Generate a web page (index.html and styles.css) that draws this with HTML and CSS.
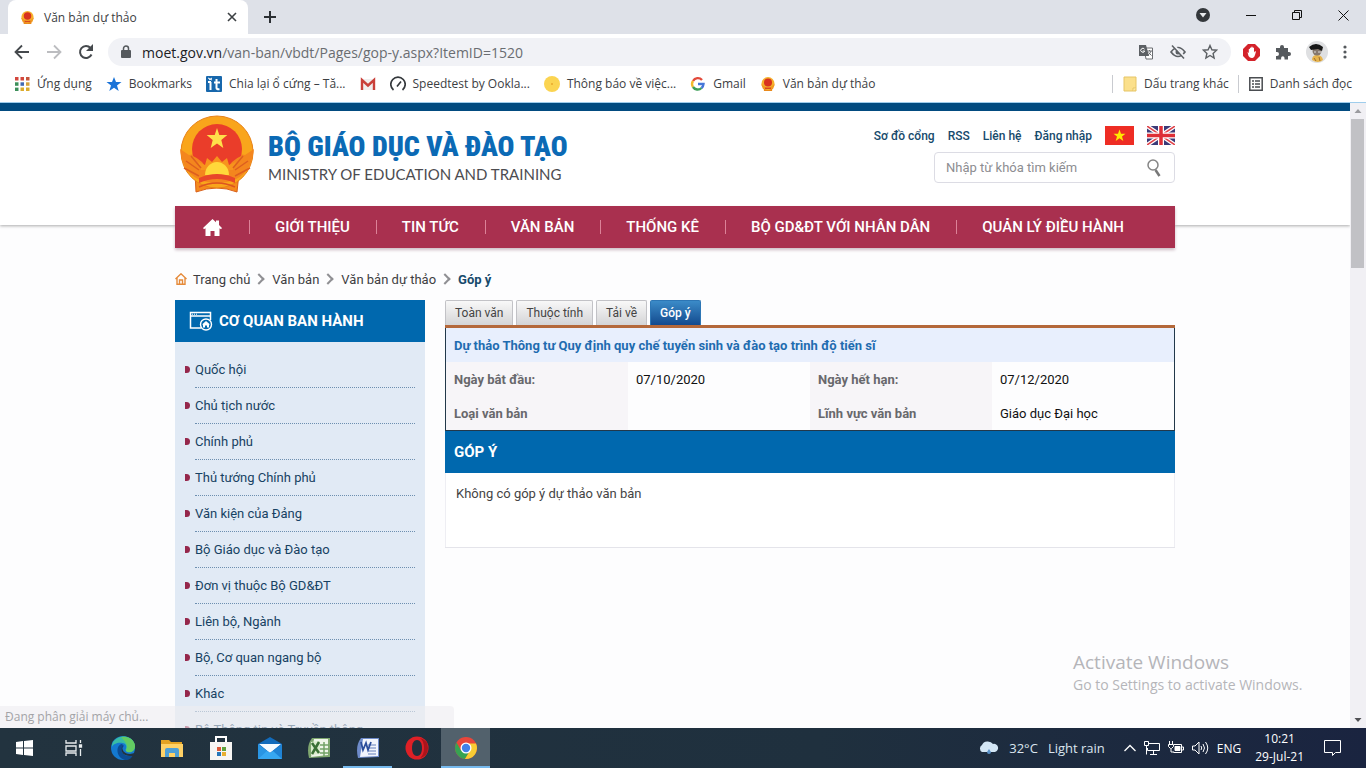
FILE: index.html
```html
<!DOCTYPE html>
<html lang="vi">
<head>
<meta charset="utf-8">
<title>Văn bản dự thảo</title>
<link rel="stylesheet" href="styles.css">
</head>
<body>
<svg class="defs" aria-hidden="true">
  <symbol id="emblem" viewBox="0 0 76 80">
    <path d="M16 58L17 77Q38 69 58 77L60 58Z" fill="#f58a1c" stroke="#d9601a"/>
    <circle cx="38" cy="37" r="36" fill="#f9a51b" stroke="#e88218"/>
    <path d="M1 34Q4 60 24 66L38 69L52 66Q72 60 75 34L66 40L60 39L54 47L22 47L16 39L10 40Z" fill="#f4861e"/>
    <circle cx="38" cy="34" r="25" fill="#ea3d2a"/>
    <path d="M38 13l2.300 7h8l-6 5 2 8-6.300-4.500-6.300 4.500 2-8-6-5h8z" fill="#ffe04a"/>
    <path d="M12 44q10 4 14 14M64 44q-10 4-14 14" fill="none" stroke="#f4861e" stroke-width="7"/>
    <path d="M22 55l-3-8 7 3 2-7 5 4 5-6 5 6 5-4 2 7 7-3-3 8z" fill="#f7941d"/>
    <path d="M26 60a12 13 0 0 1 24 0z" fill="#ffd83a"/>
    <path d="M7 46l13 9M12 41l10 12M69 46l-13 9M64 41l-10 12M5 53l15 8M71 53l-15 8" stroke="#dd5f1f" stroke-width="1.500"/>
    <path d="M20 63Q38 55 56 63V68Q38 60 20 68Z" fill="#e8472a"/>
    <path d="M20 72Q38 64 56 72" fill="none" stroke="#dd5420" stroke-width="1.500"/>
  </symbol>
  <symbol id="emblem-small" viewBox="0 0 16 16">
    <path d="M3 9h10l-1 6H4z" fill="#e98a1c"/>
    <circle cx="8" cy="7.500" r="6.500" fill="#f6b12c"/>
    <circle cx="8" cy="6.500" r="4" fill="#d8321f"/>
    <path d="M1 8l6 4h2l6-4-2 5H3z" fill="#f19a22"/>
    <path d="M5 11.500h6v1.500H5z" fill="#d9481f"/>
  </symbol>
</svg>

<header class="tabstrip">
  <div class="tab">
    <svg class="fav" width="15" height="15"><use href="#emblem-small"/></svg>
    <span class="tab-title">Văn bản dự thảo</span>
    <button class="plain" aria-label="Đóng thẻ"><svg width="10" height="10" viewBox="0 0 10 10"><path d="M1 1l8 8M9 1l-8 8" stroke="#3c4043" stroke-width="1.600"/></svg></button>
  </div>
  <button class="plain newtab" aria-label="Thẻ mới"><svg width="14" height="14" viewBox="0 0 14 14"><path d="M7 1v12M1 7h12" stroke="#2b2f33" stroke-width="2"/></svg></button>
  <div class="winbtns">
    <button class="plain" aria-label="Tìm thẻ"><svg width="14" height="14" viewBox="0 0 14 14"><circle cx="7" cy="7" r="7" fill="#33373b"/><path d="M3.500 5h7L7 9.500z" fill="#e8eaed"/></svg></button>
    <button class="plain" aria-label="Thu nhỏ"><svg width="10" height="10" viewBox="0 0 10 10"><path d="M0 5.500h10" stroke="#111"/></svg></button>
    <button class="plain" aria-label="Khôi phục"><svg width="10" height="10" viewBox="0 0 10 10"><path d="M.5 2.500h7v7h-7zM2.500 2.500v-2h7v7h-2" fill="none" stroke="#111"/></svg></button>
    <button class="plain" aria-label="Đóng"><svg width="11" height="11" viewBox="0 0 11 11"><path d="M.5 .5l10 10M10.500 .5l-10 10" stroke="#111"/></svg></button>
  </div>
</header>

<div class="toolbar">
  <button class="plain" aria-label="Quay lại"><svg width="16" height="16" viewBox="0 0 16 16"><path d="M15 8H2M8 1.500L1.500 8L8 14.500" fill="none" stroke="#45494d" stroke-width="1.800"/></svg></button>
  <button class="plain" aria-label="Tiến"><svg width="16" height="16" viewBox="0 0 16 16"><path d="M1 8h13M8 1.500L14.500 8L8 14.500" fill="none" stroke="#bcbdc0" stroke-width="1.800"/></svg></button>
  <button class="plain" aria-label="Tải lại"><svg width="16" height="16" viewBox="0 0 16 16"><path d="M13.500 10.500A6 6 0 1 1 12.500 4" fill="none" stroke="#45494d" stroke-width="2"/><path d="M15 0v7H8z" fill="#45494d"/></svg></button>
  <div class="omnibox">
    <svg width="10" height="14" viewBox="0 0 10 14"><rect y="5" width="10" height="8" rx="1" fill="#55595d"/><path d="M2.500 6V3.500a2.500 2.500 0 0 1 5 0V6" fill="none" stroke="#55595d" stroke-width="1.500"/></svg>
    <a class="url" href="#"><span>moet.gov.vn</span>/van-ban/vbdt/Pages/gop-y.aspx?ItemID=1520</a>
    <button class="plain" aria-label="Dịch"><svg width="16" height="16" viewBox="0 0 16 16"><path d="M6 4h8.500v11H8z" fill="#fff" stroke="#6a6d71"/><path d="M1 1h7l3 11H1z" fill="#5c6064"/><path d="M6.500 5.200A2 2 0 1 0 6.700 7H4.700" stroke="#fff" fill="none"/><path d="M9 7h5M11.500 6v1M13 7q-1 3-3 4M10.500 8.500l3 3" stroke="#6a6d71" fill="none"/></svg></button>
    <button class="plain" aria-label="Cookie bị chặn"><svg width="16" height="16" viewBox="0 0 16 16"><path d="M1 8Q8-1 15 8Q8 17 1 8z" fill="none" stroke="#5c6064" stroke-width="1.700"/><circle cx="8" cy="8" r="2.500" fill="#5c6064"/><path d="M3.500 1L15 13.500" stroke="#f1f2f6" stroke-width="2"/><path d="M2 1.500L14 14.500" stroke="#5c6064" stroke-width="1.500"/></svg></button>
    <button class="plain" aria-label="Dấu trang"><svg width="16" height="16" viewBox="0 0 16 16"><path d="M8 1.500l1.900 4.300 4.700.4-3.500 3.200 1 4.600L8 11.500 3.900 14l1-4.600L1.400 6.200l4.700-.4z" fill="none" stroke="#5c6064" stroke-width="1.400"/></svg></button>
  </div>
  <div class="extensions">
    <button class="plain" aria-label="AdBlock"><svg width="17" height="17" viewBox="0 0 17 17"><path d="M5 0h7l5 5v7l-5 5H5l-5-5V5z" fill="#d4232b"/><path d="M4.500 8l1 4q1.500 2.500 4 2 2-.5 2.500-3l1-3.500q-1.200-.6-2 1V4q-.8-.8-1.300 0V3q-.8-.8-1.400 0v1Q7.600 3 7 4v1q-.7-.7-1.200 0v4z" fill="#fff"/></svg></button>
    <button class="plain" aria-label="Tiện ích"><svg width="16" height="16" viewBox="0 0 16 16"><path d="M1 4h4V3a2 2 0 0 1 4 0v1h4v4h1a2 2 0 0 1 0 4h-1v3.500H9.500V14a1.700 1.700 0 0 0-3.400 0v1.500H1V12h1a2 2 0 0 0 0-4H1z" fill="#55595d"/></svg></button>
    <button class="plain" aria-label="Hồ sơ"><svg width="22" height="22" viewBox="0 0 22 22"><circle cx="11" cy="11" r="11" fill="#dfe0e2"/><path d="M6 19q0-5 5-5t6 5q-5 4-11 0z" fill="#e7b44d"/><circle cx="11" cy="10" r="4.500" fill="#85776d"/><path d="M3 6q7-6 14 0l-1 4-4-2-7 1z" fill="#171717"/><path d="M8 11h2M12 11h3" stroke="#ddd"/><path d="M8 17l2 3M13 16l1 4" stroke="#9d6d2e"/></svg></button>
    <button class="plain" aria-label="Trình đơn"><svg width="4" height="14" viewBox="0 0 4 14"><g fill="#55595d"><circle cx="2" cy="2" r="1.600"/><circle cx="2" cy="7" r="1.600"/><circle cx="2" cy="12" r="1.600"/></g></svg></button>
  </div>
</div>

<nav class="bookmarks" aria-label="Dấu trang">
  <a href="#"><svg width="16" height="16" viewBox="0 0 16 16"><path d="M1 1h3.500v3.500H1zM6.500 1H10v3.500H6.500z" fill="#d3473d"/><path d="M12 1h3.500v3.500H12z" fill="#c4553c"/><path d="M1 6.300h3.500v3.500H1z" fill="#3d8f5a"/><path d="M6.500 6.300H10v3.500H6.500z" fill="#4169b5"/><path d="M12 6.300h3.500v3.500H12z" fill="#d7a13b"/><path d="M1 11.600h3.500V15H1z" fill="#3d8f5a"/><path d="M6.500 11.600H10V15H6.500zM12 11.600h3.500V15H12z" fill="#dcac2d"/></svg>Ứng dụng</a>
  <a href="#"><svg width="16" height="16" viewBox="0 0 16 16"><path d="M8 1l2 5h5.500L11 9.500l1.700 5.500L8 11.700 3.300 15 5 9.500.5 6H6z" fill="#1a73d8"/></svg>Bookmarks</a>
  <a href="#"><svg width="16" height="16" viewBox="0 0 16 16"><rect width="16" height="16" rx="1" fill="#1767ac"/><path d="M4.500 6v8M10.500 3v9q0 1.500 3 1.200M2 6h3M8 6.500h6" fill="none" stroke="#fff" stroke-width="2"/><path d="M2 2l4 2M6 2L3 4" stroke="#fff"/></svg>Chia lại ổ cứng – Tă...</a>
  <a href="#" aria-label="Gmail"><svg class="alone" width="16" height="16" viewBox="0 0 16 16"><path d="M1 3h14v11H1z" fill="#f0eeee"/><path d="M2 14V4l6 5.500L14 4v10" fill="none" stroke="#c9403a" stroke-width="2.400"/></svg></a>
  <a href="#"><svg width="16" height="16" viewBox="0 0 16 16"><path d="M3.500 14A7.200 7.200 0 1 1 12.500 14M7 10.500L11 5.500" fill="none" stroke="#34383c" stroke-width="1.700"/></svg>Speedtest by Ookla...</a>
  <a href="#"><svg width="16" height="16" viewBox="0 0 16 16"><circle cx="8" cy="8" r="8" fill="#fbd451"/><circle cx="8" cy="8" r="1" fill="#e9a92c"/></svg>Thông báo về việc...</a>
  <a href="#"><svg width="16" height="16" viewBox="0 0 16 16" fill="none" stroke-width="2.400"><path d="M3 5A5.500 5.500 0 0 1 12 4" stroke="#e24a3b"/><path d="M3 11A5.500 5.500 0 0 1 3 5" stroke="#f3b92d"/><path d="M3 11A5.500 5.500 0 0 0 11.500 12" stroke="#3d9e58"/><path d="M8 8h5.500a5.500 5.500 0 0 1-2 4" stroke="#4576d9"/></svg>Gmail</a>
  <a href="#"><svg width="16" height="16"><use href="#emblem-small"/></svg>Văn bản dự thảo</a>
  <div class="right-marks">
    <a href="#"><svg width="14" height="16" viewBox="0 0 14 16"><path d="M1 1h12v14H1z" fill="#fbe08c" stroke="#e6c566"/><path d="M10 15v-3h3" fill="#fff0b8" stroke="#e6c566"/></svg>Dấu trang khác</a>
    <a href="#"><svg width="14" height="14" viewBox="0 0 14 14"><path d="M.8 .8h12.400v12.400H.8z" fill="none" stroke="#4a4d51" stroke-width="1.500"/><path d="M3 4h2M3 7h2M3 10h2M6 4h5M6 7h5M6 10h5" stroke="#4a4d51" stroke-width="1.300"/></svg>Danh sách đọc</a>
  </div>
</nav>

<div class="viewport">
  <div class="page">
    <header class="site-header">
      <div class="wrap header-row">
        <a class="logo" href="#">
          <svg width="76" height="80"><use href="#emblem"/></svg>
          <span class="logo-text"><strong>BỘ GIÁO DỤC VÀ ĐÀO TẠO</strong><span>MINISTRY OF EDUCATION AND TRAINING</span></span>
        </a>
        <div class="tools">
          <div class="quick">
            <a href="#">Sơ đồ cổng</a><a href="#">RSS</a><a href="#">Liên hệ</a><a href="#">Đăng nhập</a>
            <a href="#" aria-label="Tiếng Việt"><svg width="29" height="19" viewBox="0 0 29 19"><path d="M0 0h29v19H0z" fill="#ee2d24"/><path d="M14.500 3.500l1.500 4.300h4.500L17 10.500l1.300 4.500-3.800-2.700-3.800 2.700 1.300-4.500-3.500-2.700H13z" fill="#ffea00"/></svg></a>
            <a href="#" aria-label="English"><svg width="28" height="19" viewBox="0 0 28 19"><path d="M0 0h28v19H0z" fill="#3b3a78"/><path d="M0 0l28 19M28 0L0 19" stroke="#fff" stroke-width="4"/><path d="M0 0l28 19M28 0L0 19" stroke="#e0434a" stroke-width="1.500"/><path d="M14 0v19M0 9.500h28" stroke="#fff" stroke-width="6"/><path d="M14 0v19M0 9.500h28" stroke="#de2f37" stroke-width="3.500"/></svg></a>
          </div>
          <form class="search">
            <input type="text" aria-label="Tìm kiếm" placeholder="Nhập từ khóa tìm kiếm">
            <button type="button" class="plain" aria-label="Tìm"><svg width="14" height="18" viewBox="0 0 14 18"><circle cx="6" cy="6" r="5" fill="none" stroke="#858585" stroke-width="1.500"/><path d="M8.500 11l4 6" stroke="#777" stroke-width="2.500"/></svg></button>
          </form>
        </div>
      </div>
    </header>

    <nav class="wrap mainnav">
      <a class="home" href="#" aria-label="Trang chủ"><svg width="19" height="17" viewBox="0 0 19 17"><path d="M9.500 0L13 3.200V1.500h3v4.500L19 9l-1 1.200-1.500-1V17h-5v-5h-4v5h-5V9.200l-1.500 1L0 9z" fill="#fff"/></svg></a>
      <a href="#">GIỚI THIỆU</a><a href="#">TIN TỨC</a><a href="#">VĂN BẢN</a><a href="#">THỐNG KÊ</a><a href="#">BỘ GD&amp;ĐT VỚI NHÂN DÂN</a><a href="#">QUẢN LÝ ĐIỀU HÀNH</a>
    </nav>

    <div class="wrap crumbs">
      <a href="#"><svg width="12" height="12" viewBox="0 0 12 12"><path d="M.5 6L6 .8 11.500 6M2 5v6.300h8V5M4.500 11V7h3v4" fill="none" stroke="#e58a3a" stroke-width="1.400"/></svg>Trang chủ</a>
      <a href="#">Văn bản</a><a href="#">Văn bản dự thảo</a><a class="current" href="#">Góp ý</a>
    </div>

    <div class="wrap columns">
      <aside class="sidebar">
        <h2><svg width="24" height="20" viewBox="0 0 24 20"><path d="M12 17H1.500V1.500h20V9M1.500 5h20" fill="none" stroke="#fff" stroke-width="1.500"/><path d="M3 3.200h6" stroke="#fff" stroke-dasharray="1 1"/><circle cx="17" cy="13.500" r="5.500" fill="#0068ae" stroke="#fff" stroke-width="1.400"/><path d="M17 10l4 3.500h-1V16.500h-2V14.500h-2v2h-2v-3h-1z" fill="#fff"/></svg>CƠ QUAN BAN HÀNH</h2>
        <ul>
          <li><a href="#">Quốc hội</a></li>
          <li><a href="#">Chủ tịch nước</a></li>
          <li><a href="#">Chính phủ</a></li>
          <li><a href="#">Thủ tướng Chính phủ</a></li>
          <li><a href="#">Văn kiện của Đảng</a></li>
          <li><a href="#">Bộ Giáo dục và Đào tạo</a></li>
          <li><a href="#">Đơn vị thuộc Bộ GD&amp;ĐT</a></li>
          <li><a href="#">Liên bộ, Ngành</a></li>
          <li><a href="#">Bộ, Cơ quan ngang bộ</a></li>
          <li><a href="#">Khác</a></li>
          <li><a href="#">Bộ Thông tin và Truyền thông</a></li>
        </ul>
      </aside>
      <main class="main">
        <div class="doc-tabs">
          <a href="#">Toàn văn</a><a href="#">Thuộc tính</a><a href="#">Tải về</a><a class="active" href="#">Góp ý</a>
        </div>
        <table class="doc">
          <tr><th class="doc-title" colspan="4">Dự thảo Thông tư Quy định quy chế tuyển sinh và đào tạo trình độ tiến sĩ</th></tr>
          <tr><th>Ngày bắt đầu:</th><td>07/10/2020</td><th>Ngày hết hạn:</th><td>07/12/2020</td></tr>
          <tr><th>Loại văn bản</th><td></td><th>Lĩnh vực văn bản</th><td>Giáo dục Đại học</td></tr>
        </table>
        <section class="feedback">
          <h2>GÓP Ý</h2>
          <p>Không có góp ý dự thảo văn bản</p>
        </section>
      </main>
    </div>
  </div>
  <div class="scrollbar">
    <svg width="16" height="16" viewBox="0 0 16 16"><path d="M4.500 10h7L8 6z" fill="#9b9b9f"/></svg>
    <div class="thumb"></div>
    <svg class="down" width="16" height="16" viewBox="0 0 16 16"><path d="M4.500 6h7L8 10z" fill="#505054"/></svg>
  </div>
  <div class="status">Đang phân giải máy chủ...</div>
  <div class="watermark"><strong>Activate Windows</strong>Go to Settings to activate Windows.</div>
</div>

<footer class="taskbar">
  <button aria-label="Start"><svg width="17" height="16" viewBox="0 0 17 16"><path d="M0 2l7-1v6.500H0zM8 .9L17 0v7.500H8zM0 8.500h7V15l-7-1zM8 8.500h9V16l-9-1z" fill="#fff"/></svg></button>
  <button aria-label="Task View"><svg width="18" height="16" viewBox="0 0 18 16" fill="none" stroke="#e7ecee" stroke-width="1.300"><path d="M1 0v3h10V0M1 6h10v5H1zM1 16v-3h10v3M15.500 0v3M15.500 9v7"/><path d="M14.500 5h2v2h-2z" fill="#fff"/></svg></button>
  <button aria-label="Edge"><svg width="24" height="24" viewBox="0 0 24 24"><circle cx="12" cy="12" r="12" fill="#1479cf"/><path d="M1 9C3-1 20-3 23.500 8c2 8-7 10-9 6 1-2 2-6-3-7C7 6 2 8 1 11z" fill="#38bca5"/><path d="M10 1c9-2 17 6 13 13-3 4-9 2-8 0 3-5-1-8-5-13z" fill="#62cb62"/><path d="M11 8c-7 1-6 15 4 16 3 0 6-2 7-5-4 2-9 1-11-3-1-3 0-5 2-6z" fill="#0c4c93"/><path d="M12 10c-2 3 1 8 7 8l5-1v3h-5c-6 0-10-4-8-9z" fill="#22323f"/></svg></button>
  <button aria-label="File Explorer"><svg width="24" height="20" viewBox="0 0 24 20"><path d="M1 2h8l2 2h11v14H1z" fill="#e5a323"/><path d="M1 6h22v13H1z" fill="#ffd166"/><path d="M5 19v-7q0-2 2-2h10q2 0 2 2v7h-4v-4H9v4z" fill="#4e9fd6"/></svg></button>
  <button aria-label="Store"><svg width="24" height="24" viewBox="0 0 24 24"><path d="M7 8V1h10v7" fill="none" stroke="#fff" stroke-width="2"/><path d="M1 6h22v18H1z" fill="#f7f5f3"/><path d="M8 11h4v4H8z" fill="#dc5938"/><path d="M13 11h4v4h-4z" fill="#5fa23d"/><path d="M8 16h4v4H8z" fill="#2777b9"/><path d="M13 16h4v4h-4z" fill="#e8af31"/></svg></button>
  <button aria-label="Mail"><svg width="24" height="22" viewBox="0 0 24 22"><path d="M0 7L12 0l12 7v15H0z" fill="#126bbb"/><path d="M1 7h22L12 16z" fill="#f5fbff"/><path d="M0 7l12 9L0 22z" fill="#2995e3"/><path d="M24 7l-12 9 12 6z" fill="#1f83d5"/><path d="M0 22l9-8 3 2 3-2 9 8z" fill="#36a7f1"/></svg></button>
  <button aria-label="Excel"><svg width="24" height="22" viewBox="0 0 24 22"><path d="M5 1h18v19L2 21q-3-12 3-20z" fill="#7fa76f"/><path d="M7 2h14v16l-17 2z" fill="#eef5e8"/><path d="M4 5l9-1v13l-9 1z" fill="#dbeccd"/><path d="M5 6l7 10M12 5L5 17" stroke="#3b7135" stroke-width="2.500"/><path d="M13 8h9M13 12h9M13 16h9M17 5v14" stroke="#73a267" stroke-width="1.500"/></svg></button>
  <button class="running" aria-label="Word"><svg width="24" height="22" viewBox="0 0 24 22"><path d="M5 1h18v19L2 21q-3-12 3-20z" fill="#6e8bca"/><path d="M7 2h15v17l-18 1z" fill="#f2f5fc"/><path d="M12 8h8M12 11h8M12 14h8M12 17h8" stroke="#657fb9"/><path d="M5 5l2 8 3-7 2 7 3-8" fill="none" stroke="#2c4f9c" stroke-width="1.800"/></svg></button>
  <button aria-label="Opera"><svg width="24" height="24" viewBox="0 0 24 24"><circle cx="12" cy="12" r="11.500" fill="#df2026"/><path d="M12 4c3 0 5 3 5 8s-2 8-5 8-5-3-5-8 2-8 5-8z" fill="#23303d"/><path d="M15 2q8 2 8 10t-8 10q4-3 4-10t-4-10z" fill="#aa141c"/></svg></button>
  <button class="running current" aria-label="Chrome"><svg width="24" height="24" viewBox="0 0 24 24"><circle cx="12" cy="12" r="11" fill="#e9463b"/><path d="M2.500 6.500A11 11 0 0 0 11 23l5-8.500-9 0z" fill="#37a352"/><path d="M22 7.500A11 11 0 0 1 11 23l6-10-2-5.500z" fill="#f9cc34"/><circle cx="12" cy="12" r="5.500" fill="#fff"/><circle cx="12" cy="12" r="4.200" fill="#4381e8"/></svg></button>
  <div class="tray">
    <button class="weather"><svg width="21" height="16" viewBox="0 0 21 16"><path d="M4 12a4 4 0 0 1 0-7 6 5 0 0 1 11-1 4 4 0 0 1 2 8z" fill="#d3e6f5"/><path d="M9 12l2-3 2 3a2 2 0 1 1-4 0z" fill="#5b92c8"/></svg><span>32°C</span><span>Light rain</span></button>
    <button aria-label="Hiện thêm"><svg width="12" height="8" viewBox="0 0 12 8"><path d="M.5 7L6 1.500 11.500 7" fill="none" stroke="#fff" stroke-width="1.300"/></svg></button>
    <button aria-label="Mạng"><svg width="16" height="14" viewBox="0 0 16 14" fill="none" stroke="#fff"><path d="M5 2.500h10.500v7H3.500V7M.5 .5h4v4h-4zM2.500 4.500v9M9.500 10v3M6 13.500h7"/></svg></button>
    <button aria-label="Pin"><svg width="16" height="14" viewBox="0 0 16 14" fill="none" stroke="#fff"><path d="M6 3.500h7.500v8h-8M14 6h1.500v3H14M1.500 0v3M4.500 0v3M.5 3.500h5v2l-2 2h-1l-2-2zM3 8v3h3"/><path d="M7 5.500h5v4H7z" fill="#fff"/></svg></button>
    <button aria-label="Âm lượng"><svg width="17" height="14" viewBox="0 0 17 14" fill="none" stroke="#fff"><path d="M.5 5h2.500l4-4v12l-4-4H.5zM9 5q1.500 2 0 4M11 3q3 4 0 8M13.500 1q4.500 6 0 12"/></svg></button>
    <span class="lang">ENG</span>
    <time class="clock"><span>10:21</span><span>29-Jul-21</span></time>
    <button class="notice" aria-label="Thông báo"><svg width="17" height="16" viewBox="0 0 17 16"><path d="M.5 .5h16v12h-5l-3 3v-3h-8z" fill="none" stroke="#fff"/></svg></button>
  </div>
</footer>
</body>
</html>
```
FILE: styles.css
```css
* { box-sizing: border-box; }
body {
  margin: 0;
  height: 100vh;
  display: flex;
  flex-direction: column;
  overflow: hidden;
  background: #fff;
  font-family: "Open Sans", "Noto Sans", sans-serif;
  font-size: 12px;
  color: #3c4043;
}
a { color: inherit; text-decoration: none; }
svg { display: block; flex: none; }
h2, p, ul { margin: 0; padding: 0; }
button { font: inherit; color: inherit; border: 0; background: none; padding: 0; }
.plain { display: flex; align-items: center; }
.defs { position: absolute; width: 0; height: 0; }

/* Browser chrome */
.tabstrip { display: flex; height: 34px; flex: none; background: #dee1e8; padding-left: 8px; }
.tab {
  display: flex;
  align-items: center;
  width: 240px;
  padding: 0 11px 0 12px;
  background: #fff;
  border-radius: 8px 8px 0 0;
}
.tab-title { flex: 1; margin-left: 9px; }
.newtab { margin-left: 15px; }
.winbtns { display: flex; align-items: center; gap: 36px; margin-left: auto; padding: 0 17px 4px 0; }
.toolbar { display: flex; align-items: center; flex: none; height: 36px; gap: 16px; padding: 0 19px 0 14px; }
.omnibox {
  display: flex;
  flex: 1;
  align-items: center;
  gap: 16px;
  height: 28px;
  margin-left: -2px;
  padding: 0 13px;
  border-radius: 14px;
  background: #f1f2f6;
}
.url { flex: 1; margin-left: -5px; font-size: 14px; color: #6a6d71; }
.url span { color: #202124; }
.extensions { display: flex; align-items: center; gap: 15px; margin-left: -4px; }
.bookmarks {
  display: flex;
  align-items: center;
  flex: none;
  height: 33px;
  gap: 14px;
  padding: 0 14px 5px;
  border-bottom: 1px solid #9fcdec;
  white-space: nowrap;
}
.bookmarks a { display: flex; align-items: center; gap: 7px; }
.right-marks { display: flex; margin-left: auto; }
.right-marks a { height: 18px; padding-left: 10px; border-left: 1px solid #c9cbd0; }
.right-marks a + a { margin-left: 9px; }

/* Web page */
.viewport { position: relative; display: flex; flex: 1; min-height: 0; overflow: hidden; }
.page { flex: 1; min-width: 0; background: #fdfdfe; font-family: Roboto, sans-serif; font-size: 13px; color: #444; overflow: hidden; }
.wrap { width: 1000px; max-width: 100%; margin: 0 auto; }
.site-header { height: 122px; background: #fff; border-top: 8px solid #024b80; box-shadow: 0 1px 3px #aaa; }
.header-row { display: flex; justify-content: space-between; align-items: flex-start; }
.logo { display: flex; gap: 13px; padding: 4px 0 0 4px; }
.logo-text { display: flex; flex-direction: column; padding-top: 14px; }
.logo-text strong {
  font-family: "Roboto Condensed", "Liberation Sans Narrow", Roboto, sans-serif;
  font-size: 28px;
  font-weight: 900;
  line-height: 36px;
  color: #0b6ab5;
  white-space: nowrap;
}
.logo-text span { font-family: Lato, sans-serif; font-size: 15px; line-height: 18px; color: #4c4c50; white-space: nowrap; }
.tools { display: flex; flex-direction: column; align-items: flex-end; gap: 7px; padding-top: 15px; }
.quick { display: flex; align-items: center; gap: 13px; color: #174a6c; font-size: 12px; font-weight: 500; }
.search {
  display: flex;
  align-items: center;
  width: 241px;
  height: 31px;
  padding: 0 13px 0 11px;
  border: 1px solid #dcdce4;
  border-radius: 4px;
}
.search input { flex: 1; min-width: 0; padding: 0; border: 0; background: none; font: 13px Roboto, sans-serif; }
.search input::placeholder { color: #8d8d91; }
.mainnav {
  position: relative;
  display: flex;
  align-items: center;
  height: 42px;
  margin-top: -19px;
  background: #a9304f;
  box-shadow: 0 2px 3px #cdbcc5;
  color: #fff;
  font-size: 15px;
  font-weight: 500;
  white-space: nowrap;
}
.mainnav a { padding: 0 26px 0 25px; line-height: 14px; border-left: 1px solid #dc8298; }
.mainnav .home { padding: 0 27px 0 28px; border: 0; }
.crumbs { display: flex; align-items: center; height: 20px; margin-top: 21px; color: #3e3e42; }
.crumbs a { display: flex; align-items: center; gap: 6px; }
.crumbs a + a::before {
  content: "";
  width: 6px;
  height: 6px;
  margin: 0 3px 0 5px;
  border: solid #8f8f93;
  border-width: 2px 2px 0 0;
  transform: rotate(45deg);
}
.crumbs .current { font-weight: 700; color: #174a6c; }
.columns { display: flex; gap: 20px; margin-top: 11px; }
.sidebar { width: 250px; flex: none; background: #e1eaf5; }
.sidebar h2, .feedback h2 {
  display: flex;
  align-items: center;
  height: 42px;
  background: #0068ae;
  color: #fff;
  font-size: 15px;
  font-weight: 700;
}
.sidebar h2 { gap: 6px; padding-left: 14px; }
.sidebar ul { list-style: none; padding: 10px 10px 0 20px; }
.sidebar li {
  position: relative;
  height: 36px;
  line-height: 35px;
  border-bottom: 1px dotted #6d8fb0;
  color: #174263;
}
.sidebar li::before {
  content: "";
  position: absolute;
  left: -10px;
  top: 14px;
  width: 5px;
  height: 7px;
  border-radius: 0 4px 4px 0;
  background: #95274b;
}
.main { flex: 1; min-width: 0; }
.doc-tabs { display: flex; gap: 3px; height: 28px; border-bottom: 3px solid #b4683a; font-size: 12px; }
.doc-tabs a {
  padding: 0 9px;
  line-height: 25px;
  border: 1px solid #c2c2c6;
  border-bottom: 0;
  border-radius: 2px 2px 0 0;
  background: linear-gradient(#f8f8f8, #d4d4d6);
}
.doc-tabs .active { background: linear-gradient(#3b8bc8, #134a8e); border-color: #2d76b5; color: #fff; font-weight: 500; }
.doc { width: 100%; table-layout: fixed; border-collapse: separate; border-spacing: 0; border: 1px solid #22384a; border-top: 0; }
.doc th, .doc td { height: 34px; padding: 0 8px; text-align: left; color: #111; }
.doc th { background: #f7f5f8; color: #68686c; }
.doc .doc-title { background: #e8effd; color: #1f6cb0; }
.feedback { background: #fff; border-bottom: 1px solid #e4e4ea; }
.feedback h2 { padding-left: 9px; }
.feedback p { height: 74px; padding: 13px 10px; border: solid #eeeef3; border-width: 0 1px; }
.scrollbar { display: flex; flex-direction: column; flex: none; width: 16px; background: #f1f0f4; }
.thumb { width: 13px; height: 149px; margin-left: 1px; background: #c1c1c5; }
.down { margin-top: auto; }
.status {
  position: absolute;
  left: 0;
  bottom: 0;
  width: 454px;
  height: 22px;
  padding-left: 5px;
  line-height: 22px;
  border-radius: 0 4px 0 0;
  background: rgba(238, 236, 240, .6);
  color: #a3a3a7;
}
.watermark { position: absolute; left: calc(100% - 293px); bottom: 33px; color: #b5b5b9; font-size: 14px; line-height: 20px; white-space: nowrap; }
.watermark strong { display: block; font-size: 19px; font-weight: 400; line-height: 26px; }

/* Taskbar */
.taskbar { display: flex; flex: none; height: 40px; background: linear-gradient(90deg, #22333f, #1f303e 60%, #1a2440); color: #fff; }
.taskbar > button { display: flex; align-items: center; justify-content: center; width: 49px; }
.taskbar .running { border-bottom: 2px solid #76b9ed; padding-top: 2px; }
.taskbar .current { background: #52616c; }
.tray { display: flex; align-items: center; gap: 8px; margin-left: auto; padding-right: 25px; white-space: nowrap; }
.weather { display: flex; align-items: center; gap: 10px; margin-right: 11px; font-size: 13px; color: #dbe5ee; }
.clock { display: flex; flex-direction: column; align-items: center; line-height: 18px; margin: 0 12px 0 6px; }
```
